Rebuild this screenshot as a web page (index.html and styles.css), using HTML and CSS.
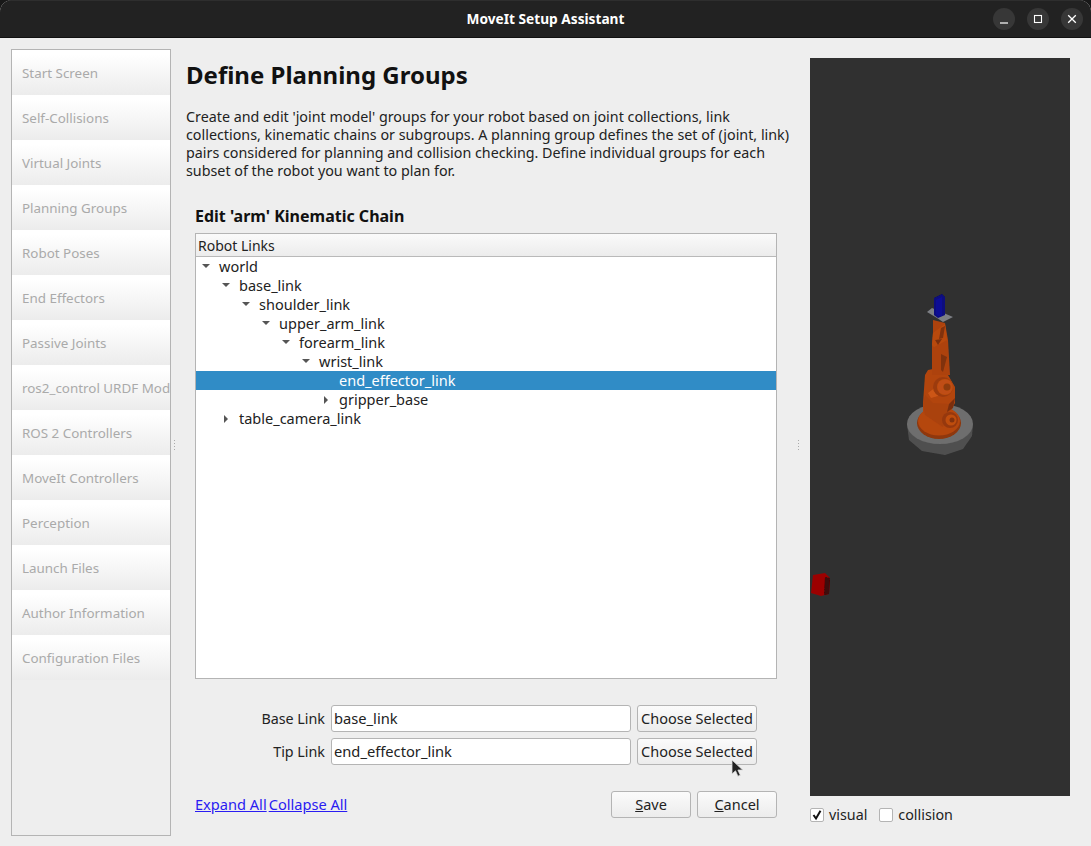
FILE: index.html
```html
<!DOCTYPE html>
<html lang="en">
<head>
    <meta charset="UTF-8">
    <title>MoveIt Setup Assistant</title>
    <link rel="stylesheet" href="styles.css">
</head>
<body>
    <div class="window">
        <header class="titlebar">
            <span class="titlebar-title">MoveIt Setup Assistant</span>
            <div class="window-buttons">
                <button class="window-button" aria-label="Minimize">
                    <svg width="22" height="22" viewBox="0 0 22 22"><path d="M7 15h8" stroke="#fff" stroke-width="1.2" fill="none"/></svg>
                </button>
                <button class="window-button" aria-label="Maximize">
                    <svg width="22" height="22" viewBox="0 0 22 22"><rect x="7.500" y="7.500" width="7" height="7" stroke="#fff" stroke-width="1.1" fill="none"/></svg>
                </button>
                <button class="window-button" aria-label="Close">
                    <svg width="22" height="22" viewBox="0 0 22 22"><path d="M7.200 7.200l7.600 7.600M14.800 7.200l-7.600 7.600" stroke="#fff" stroke-width="1.3" fill="none"/></svg>
                </button>
            </div>
        </header>

        <div class="main">
            <nav class="sidebar">
                <div class="nav-item">Start Screen</div>
                <div class="nav-item">Self-Collisions</div>
                <div class="nav-item">Virtual Joints</div>
                <div class="nav-item">Planning Groups</div>
                <div class="nav-item">Robot Poses</div>
                <div class="nav-item">End Effectors</div>
                <div class="nav-item">Passive Joints</div>
                <div class="nav-item">ros2_control URDF Mod</div>
                <div class="nav-item">ROS 2 Controllers</div>
                <div class="nav-item">MoveIt Controllers</div>
                <div class="nav-item">Perception</div>
                <div class="nav-item">Launch Files</div>
                <div class="nav-item">Author Information</div>
                <div class="nav-item">Configuration Files</div>
            </nav>

            <div class="splitter"><span></span><span></span><span></span><span></span></div>

            <section class="content">
                <h1 class="page-title">Define Planning Groups</h1>
                <p class="page-desc">Create and edit 'joint model' groups for your robot based on joint collections, link collections, kinematic chains or subgroups. A planning group defines the set of (joint, link) pairs considered for planning and collision checking. Define individual groups for each subset of the robot you want to plan for.</p>

                <div class="editor">
                    <h2 class="editor-title">Edit 'arm' Kinematic Chain</h2>

                    <div class="tree">
                        <div class="tree-header">Robot Links</div>
                        <div class="tree-row depth-0"><span class="arrow-down"></span>world</div>
                        <div class="tree-row depth-1"><span class="arrow-down"></span>base_link</div>
                        <div class="tree-row depth-2"><span class="arrow-down"></span>shoulder_link</div>
                        <div class="tree-row depth-3"><span class="arrow-down"></span>upper_arm_link</div>
                        <div class="tree-row depth-4"><span class="arrow-down"></span>forearm_link</div>
                        <div class="tree-row depth-5"><span class="arrow-down"></span>wrist_link</div>
                        <div class="tree-row depth-6 selected"><span class="arrow-none"></span>end_effector_link</div>
                        <div class="tree-row depth-6"><span class="arrow-right"></span>gripper_base</div>
                        <div class="tree-row depth-1"><span class="arrow-right"></span>table_camera_link</div>
                    </div>

                    <div class="link-form">
                        <label class="link-label">Base Link</label>
                        <div class="text-input">base_link</div>
                        <button class="btn btn-choose">Choose Selected</button>
                        <label class="link-label">Tip Link</label>
                        <div class="text-input">end_effector_link</div>
                        <button class="btn btn-choose">Choose Selected</button>
                    </div>

                    <div class="editor-footer">
                        <div class="tree-links">
                            <a href="#">Expand All</a>
                            <a href="#">Collapse All</a>
                        </div>
                        <div class="footer-buttons">
                            <button class="btn btn-action"><u>S</u>ave</button>
                            <button class="btn btn-action"><u>C</u>ancel</button>
                        </div>
                    </div>
                </div>
            </section>

            <div class="splitter"><span></span><span></span><span></span><span></span></div>

            <aside class="viewer">
                <div class="viewport">
                    <svg class="scene" viewBox="810 58 260 738" width="260" height="738">
                        <g filter="url(#soft)">
                            <!-- table cube -->
                            <polygon points="813,575 825,573 830,578 829,594 821,596 811,593" fill="#9c0606"/>
                            <polygon points="825,577 830,578 829,594 824,595" fill="#3d0808"/>
                            <!-- grey base -->
                            <polygon points="907,424 909,440 922,451 945,455 963,449 972,436 973,424" fill="#505050"/>
                            <ellipse cx="940" cy="424" rx="33" ry="20" fill="#6e6e6e"/>
                            <!-- orange base disc -->
                            <ellipse cx="939" cy="423" rx="22" ry="16" fill="#8f370b"/>
                            <ellipse cx="939" cy="421" rx="21" ry="14.500" fill="#b5460e"/>
                            <!-- lower arm -->
                            <polygon points="925,375 928,370 933,369 948,375 955,387 955,403 950,412 942,427 923,413 923,403" fill="#b2450e"/>
                            <polygon points="925,395 933,403 950,404 949,411 943,427 925,415 923,404" fill="#aa420d"/>
                            <polygon points="928,393 936,387 938,396 931,398" fill="#cc5716"/>
                            <circle cx="943" cy="387" r="10" fill="#9c3b0b"/>
                            <circle cx="945" cy="387" r="8" fill="#bf4e12"/>
                            <circle cx="947" cy="387" r="3.500" fill="#8e3a0c"/>
                            <polygon points="949,404 955,398 953,408 947,412" fill="#7a2f08"/>
                            <circle cx="950" cy="420" r="8" fill="#963809"/>
                            <circle cx="951" cy="420" r="5.500" fill="#bf4e10"/>
                            <circle cx="952" cy="420" r="2.500" fill="#833208"/>
                            <!-- upper arm -->
                            <polygon points="933,320 945,323 948,340 950,375 932,375 932,345 933,332" fill="#ad430e"/>
                            <polygon points="933,333 945,324 947,340 934,347 932,345" fill="#b84a0f"/>
                            <polygon points="941,328 945,326 943,338 939,339" fill="#80310a"/>
                            <polygon points="935,340 942,339 938,345" fill="#7a2f08"/>
                            <polygon points="941,354 947,357 943,372 941,370" fill="#803109"/>
                            <!-- tool plate -->
                            <polygon points="927,312 932,308 953,317 943,322 937,318" fill="#7d7f84"/>
                            <!-- gripper -->
                            <polygon points="934,298 942,294 945,297 945,315 938,318 934,315" fill="#08087e"/>
                            <polygon points="936,300 942,297 942,316 938,316 936,314" fill="#0a0a96"/>
                        </g>
                        <defs>
                            <filter id="soft" x="-5%" y="-5%" width="110%" height="110%"><feGaussianBlur stdDeviation="0.4"/></filter>
                        </defs>
                    </svg>
                </div>
                <div class="view-options">
                    <label class="check"><span class="check-box"><svg width="12" height="12" viewBox="0 0 12 12"><path d="M2.500 6l2.500 3.500L9.500 1.800" stroke="#111" stroke-width="2" fill="none"/></svg></span>visual</label>
                    <label class="check"><span class="check-box"></span>collision</label>
                </div>
            </aside>
        </div>

        <svg class="cursor" width="14" height="20" viewBox="0 0 14 20"><path d="M1 1v14l3.500-3.200 2.400 5.400 2.400-1-2.400-5.200h4.800z" fill="#222" stroke="#ddd" stroke-width=".8"/></svg>
    </div>
</body>
</html>
```

FILE: styles.css
```css
* {
    box-sizing: border-box;
}

html, body {
    margin: 0;
    padding: 0;
    height: 100%;
    background-color: #181818;
}

body {
    font-family: 'Noto Sans', sans-serif;
    font-size: 14.3px;
    color: #222;
    overflow: hidden;
}

.window {
    position: relative;
    width: 1091px;
    height: 846px;
    display: flex;
    flex-direction: column;
    background-color: #eeeeee;
    border-radius: 12px 12px 0 0;
    overflow: hidden;
}

/* Title bar */
.titlebar {
    flex: 0 0 38px;
    position: relative;
    display: flex;
    align-items: center;
    justify-content: center;
    background-color: #222222;
    border-top: 1px solid #2e2e2e;
    border-bottom: 1px solid #111;
    color: #fff;
}

.titlebar-title {
    font-weight: bold;
    font-size: 13.7px;
    margin-top: -2px;
}

.window-buttons {
    position: absolute;
    right: 8px;
    top: 7px;
    display: flex;
    gap: 12px;
}

.window-button {
    width: 22px;
    height: 22px;
    padding: 0;
    border: none;
    border-radius: 50%;
    background-color: #373737;
}

.window-button svg {
    display: block;
}

/* Main row */
.main {
    flex: 1;
    display: flex;
    padding: 11px 21px 10px 11px;
    min-height: 0;
}

.sidebar {
    flex: 0 0 160px;
    height: 787px;
    border: 1px solid #b4b4b4;
    overflow: hidden;
}

.nav-item {
    height: 45px;
    padding: 0 10px;
    font-size: 13.4px;
    line-height: 47px;
    white-space: nowrap;
    overflow: hidden;
    color: #aaaaaa;
    background: linear-gradient(#ffffff 10%, #ececec);
}

.splitter {
    flex: 0 0 5px;
    display: flex;
    flex-direction: column;
    justify-content: center;
    align-items: center;
    gap: 2px;
    padding-top: 4px;
    margin-left: 1px;
}

.splitter span {
    width: 1px;
    height: 1px;
    background-color: #aaa;
}

.content {
    flex: 0 0 618px;
    min-width: 0;
    padding: 0 9px 0 9px;
    height: 787px;
    display: flex;
    flex-direction: column;
}

.page-title {
    margin: 10px 0 0;
    font-size: 24px;
    line-height: 32px;
    color: #111;
}

.page-desc {
    margin: 17px 0 0;
    line-height: 18px;
    width: 604px;
}

.editor {
    padding-left: 9px;
    width: 591px;
}

.editor-title {
    margin: 26px 0 0;
    font-size: 16px;
    line-height: 20px;
    color: #111;
}

/* Tree */
.tree {
    margin-top: 7px;
    height: 446px;
    background-color: #fff;
    border: 1px solid #b4b4b4;
}

.tree-header {
    height: 23px;
    padding-left: 2px;
    line-height: 24px;
    font-size: 14px;
    background: linear-gradient(#fafafa, #ececec);
    border-bottom: 1px solid #b9b9b9;
}

.tree-row {
    height: 19px;
    line-height: 19px;
    font-size: 14.5px;
    display: flex;
    align-items: center;
    white-space: nowrap;
}

.tree-row.selected {
    background-color: #308cc6;
    color: #fff;
}

.depth-0 { padding-left: 6px; }
.depth-1 { padding-left: 26px; }
.depth-2 { padding-left: 46px; }
.depth-3 { padding-left: 66px; }
.depth-4 { padding-left: 86px; }
.depth-5 { padding-left: 106px; }
.depth-6 { padding-left: 126px; }

.arrow-none {
    flex: 0 0 17px;
}

.arrow-down {
    flex: 0 0 0;
    width: 0;
    height: 0;
    margin: 0 9px 2px 0;
    border-left: 4px solid transparent;
    border-right: 4px solid transparent;
    border-top: 4px solid #555;
}

.arrow-right {
    flex: 0 0 0;
    width: 0;
    height: 0;
    margin: 0 11px 0 2px;
    border-top: 4px solid transparent;
    border-bottom: 4px solid transparent;
    border-left: 4px solid #555;
}

/* Link form */
.link-form {
    margin-top: 26px;
    display: grid;
    grid-template-columns: 130px 300px 120px;
    grid-auto-rows: 27px;
    column-gap: 6px;
    row-gap: 6px;
    align-items: center;
}

.link-label {
    text-align: right;
}

.text-input {
    height: 27px;
    padding-left: 2px;
    font-size: 14.7px;
    line-height: 25px;
    background-color: #fff;
    border: 1px solid #b4b4b4;
    border-radius: 3px;
}

.btn {
    height: 27px;
    padding: 0 0 2px;
    font-family: inherit;
    font-size: 14.5px;
    color: #222;
    border: 1px solid #b4b4b4;
    border-radius: 3px;
    background: linear-gradient(#fbfbfb, #ececec);
}

.btn-choose {
    width: 120px;
}

.editor-footer {
    margin-top: 26px;
    display: flex;
    justify-content: space-between;
    align-items: center;
}

.tree-links {
    display: flex;
    gap: 2px;
    margin-top: -2px;
    font-size: 14.6px;
}

.tree-links a {
    color: #2a1cf2;
}

.footer-buttons {
    display: flex;
    gap: 6px;
}

.btn-action {
    width: 80px;
}

/* Robot view */
.viewer {
    flex: 0 0 260px;
    margin-left: 9px;
    padding-top: 9px;
}

.viewport {
    height: 738px;
    background-color: #303030;
}

.scene {
    display: block;
}

.view-options {
    margin-top: 9px;
    display: flex;
    gap: 12px;
}

.check {
    display: flex;
    align-items: center;
    gap: 5px;
    line-height: 19px;
}

.check-box {
    width: 14px;
    height: 14px;
    display: flex;
    align-items: center;
    justify-content: center;
    background-color: #fff;
    border: 1px solid #b4b4b4;
    border-radius: 2px;
}

.cursor {
    position: absolute;
    left: 731px;
    top: 759px;
}
```
